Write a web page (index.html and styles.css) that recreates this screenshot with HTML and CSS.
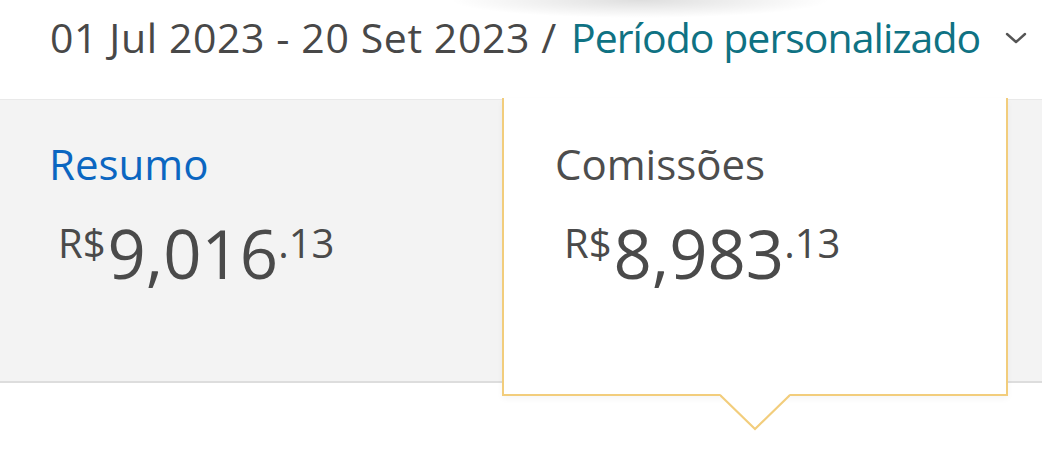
FILE: index.html
```html
<!DOCTYPE html>
<html lang="pt">
<head>
<meta charset="utf-8">
<title>Resumo</title>
<link rel="stylesheet" href="styles.css">
</head>
<body>
<header class="period">
  <span class="range">01 Jul 2023 - 20 Set 2023 /</span>
  <span class="custom">Período personalizado</span>
  <svg class="chev" width="24" height="14" viewBox="0 0 24 14"><polyline points="3,3 12,11 21,3" fill="none" stroke="#555" stroke-width="2.4" stroke-linecap="round" stroke-linejoin="round"/></svg>
</header>
<section class="panel">
  <div class="card">
    <div class="title title-link">Resumo</div>
    <div class="amount"><span class="cur">R$</span><span class="int">9,016</span><span class="dec">.13</span></div>
  </div>
  <div class="card selected">
    <div class="title">Comissões</div>
    <div class="amount"><span class="cur">R$</span><span class="int">8,983</span><span class="dec">.13</span></div>
    <svg class="pointer" width="70" height="38" viewBox="0 0 70 38"><polygon points="0,0 70,0 35,35" fill="#fff"/><polyline points="0,1 35,35 70,1" fill="none" stroke="#f2cd7c" stroke-width="2.2"/></svg>
  </div>
  <div class="card rest"></div>
</section>
</body>
</html>
```
FILE: styles.css
```css
* { box-sizing: border-box; }
html, body { margin: 0; padding: 0; background: #fff; }
body {
  width: 1042px;
  height: 451px;
  overflow: hidden;
  font-family: "Open Sans", "Liberation Sans", sans-serif;
  color: #4a4a4a;
}
.period {
  height: 99px;
  padding: 17px 0 0 50px;
  font-size: 41px;
  line-height: 41px;
  white-space: nowrap;
  display: flex;
  align-items: flex-start;
  background: radial-gradient(ellipse 190px 18px at 640px 0, rgba(0,0,0,0.13), rgba(0,0,0,0));
}
.range { color: #484848; letter-spacing: 0.6px; }
.custom { color: #0f7283; margin-left: 14px; letter-spacing: -0.95px; }
.chev { margin: 14px 0 0 24px; }
.panel {
  height: 284px;
  background: #f3f3f3;
  border-top: 1px solid #e9e9e9;
  border-bottom: 2px solid #dddddd;
  display: flex;
  align-items: flex-start;
}
.card {
  width: 502px;
  height: 100%;
  padding: 43px 0 0 49px;
}
.selected {
  position: relative;
  width: 506px;
  height: 298px;
  margin-top: -2px;
  background: #fff;
  border: 2px solid #f2cd7c;
  border-top: none;
  padding: 45px 0 0 51px;
  box-shadow: 0 3px 6px rgba(0,0,0,0.04);
}
.rest { flex: 1; width: auto; padding: 0; }
.title {
  font-size: 42px;
  line-height: 42px;
  color: #4d4d4d;
}
.title-link { color: #0b66c1; }
.amount {
  margin: 35px 0 0 9px;
  display: flex;
  align-items: flex-start;
  color: #4a4a4a;
}
.cur, .dec {
  font-size: 40px;
  line-height: 40px;
  margin-top: 3px;
}
.int {
  font-size: 67px;
  line-height: 67px;
  margin-left: 2px;
}
.pointer {
  position: absolute;
  top: 100%;
  left: 50%;
  margin-left: -35px;
}
```
